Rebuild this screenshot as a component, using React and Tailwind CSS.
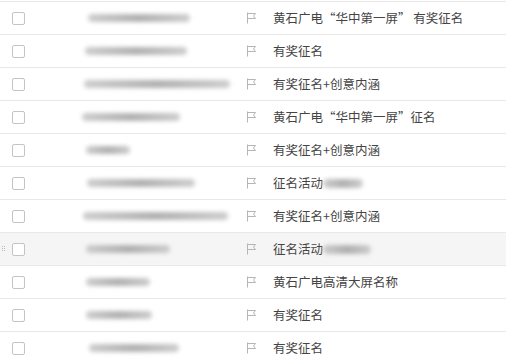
import React from "react";

const rows = [
  { b: [88, 102], t: "黄石广电“华中第一屏” 有奖征名" },
  { b: [85, 102], t: "有奖征名" },
  { b: [84, 146], t: "有奖征名+创意内涵" },
  { b: [82, 98], t: "黄石广电“华中第一屏”征名" },
  { b: [86, 44], t: "有奖征名+创意内涵" },
  { b: [87, 108], t: "征名活动", tb: 40 },
  { b: [83, 145], t: "有奖征名+创意内涵" },
  { b: [86, 84], t: "征名活动", tb: 48, hover: true },
  { b: [86, 64], t: "黄石广电高清大屏名称" },
  { b: [86, 66], t: "有奖征名" },
  { b: [89, 90], t: "有奖征名" },
];

function Flag() {
  return (
    <svg width="11" height="12" viewBox="0 0 11 12" fill="none" stroke="#b5b5b5" strokeWidth="1">
      <path d="M1.5 0.5 V11.5" />
      <path d="M1.5 1.5 H9.5 L7.5 4 L9.5 6.5 H1.5" />
    </svg>
  );
}

function Blur({ w, h = 8 }) {
  return (
    <div className="relative" style={{ width: w }}>
      <div
        className="rounded-full bg-gradient-to-r from-[#c8c8c8] via-[#a8a8a8] to-[#c8c8c8] blur-[2px] opacity-90"
        style={{ height: h }}
      />
    </div>
  );
}

export default function App() {
  return (
    <div
      className="w-[506px] h-[358px] bg-white overflow-hidden pt-px"
      style={{ fontFamily: '"Noto Sans CJK SC", "Noto Sans", sans-serif' }}
    >
      {rows.map((r, i) => (
        <div
          key={i}
          className={`relative flex items-center h-[33px] border-t border-[#e8e8e8] ${r.hover ? "bg-[#f5f5f5]" : "bg-white"}`}
        >
          {r.hover && (
            <div className="absolute left-[2px] top-[13px] grid grid-cols-2 gap-x-[1px] gap-y-[1px]">
              {[0, 1, 2, 3, 4, 5].map((k) => (
                <div key={k} className="w-[1px] h-[1px] bg-[#bbbbbb]" />
              ))}
            </div>
          )}
          <div className="w-[12px] shrink-0" />
          <div className="w-[13px] h-[13px] shrink-0 rounded-[2px] border border-[#c4c4c4] bg-white" />
          <div className="shrink-0" style={{ width: r.b[0] - 25 }} />
          <div className="shrink-0 flex items-center" style={{ width: 246 - r.b[0] }}>
            <Blur w={r.b[1]} />
          </div>
          <div className="w-[27px] shrink-0 flex items-center">
            <Flag />
          </div>
          <div className="flex items-center text-[12.5px] leading-none text-[#444444] whitespace-nowrap">
            <span>{r.t}</span>
            {r.tb && <Blur w={r.tb} h={9} />}
          </div>
        </div>
      ))}
    </div>
  );
}
